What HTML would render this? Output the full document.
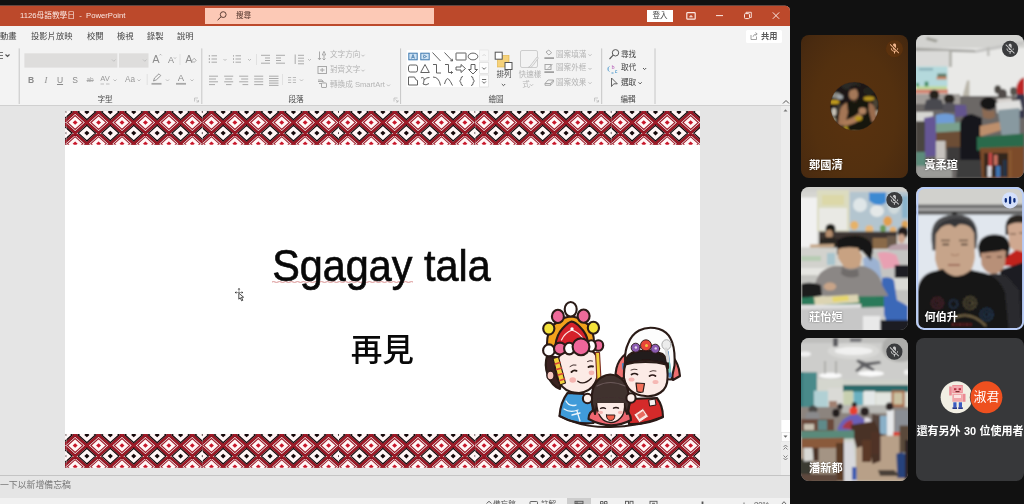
<!DOCTYPE html>
<html lang="zh-Hant">
<head>
<meta charset="utf-8">
<title>Meet</title>
<style>
*{box-sizing:border-box;margin:0;padding:0}
html,body{width:1024px;height:504px;overflow:hidden;background:#111;}
body{position:relative;font-family:"Liberation Sans","Noto Sans CJK TC",sans-serif;color:#444;}
svg{display:block}
#share{position:absolute;left:0;top:0;width:790px;height:504px;background:#e5e5e5;overflow:hidden;clip-path:inset(5.7px 0 0 0 round 0 5px 0 0)}
#share div,#share span,#share svg{position:absolute}
#titlebar{left:0;top:0;width:790px;height:26.2px;background:#bc492b}
#title{left:20px;top:9.5px;font-size:7.7px;line-height:12px;color:#fbe9e3;white-space:nowrap}
#search{left:205px;top:8.3px;width:229px;height:15.6px;background:#fcc9b6}
#search span{left:31px;top:1.6px;font-size:7.6px;line-height:12px;color:#4e3229}
#login{left:646.5px;top:10.1px;width:26px;height:12px;background:#fff;color:#444;font-size:7.6px;line-height:12px;text-align:center}
#rb{left:0;top:0;width:790px;height:504px;filter:blur(0.350px)}
#ribbon{left:0;top:26.2px;width:790px;height:79.700px;background:#f3f3f3;border-bottom:1px solid #d0d0d0}
.t{font-size:8.3px;line-height:12px;color:#454545;white-space:nowrap;transform:translateY(-50%)}
.g{font-size:7.6px;line-height:12px;color:#4a4a4a;white-space:nowrap;transform:translate(-50%,-50%)}
.d{font-size:7.6px;line-height:12px;color:#b4b4b4;white-space:nowrap;transform:translateY(-50%)}
.k{font-size:7.6px;line-height:12px;color:#444;white-space:nowrap;transform:translateY(-50%)}
.c{transform:translate(-50%,-50%) !important}
/*noLCD*/.t,.g,.d,.k,#title,#search span,#login,#notes span,#status span{will-change:transform}
#slide{left:64.5px;top:111px;width:635px;height:356.6px;background:#fff;overflow:hidden}
.band{left:0;filter:blur(0.400px)}
#t1{left:-0.500px;width:635px;top:131.200px;text-align:center;font-size:44.400px;line-height:48px;color:#080808;white-space:nowrap;letter-spacing:0;-webkit-text-stroke:0.650px #080808;filter:blur(0.350px);transform:scaleX(0.932);transform-origin:50% 50%}
#t2{left:0.300px;width:635px;top:218.800px;text-align:center;font-size:31.600px;line-height:40px;color:#080808;white-space:nowrap;font-weight:500;filter:blur(0.350px)}
#notes{left:0;top:475px;width:790px;height:23px;background:#e5e5e5;border-top:1px solid #c4c4c4}
#notes span{left:0;top:3.400px;font-size:8.900px;line-height:12px;color:#777;white-space:nowrap}
#status{left:0;top:497.5px;width:790px;height:7px;background:#f1f1f1;overflow:hidden}
#status span{font-size:7.6px;line-height:10px;color:#555;white-space:nowrap;top:2.5px}
#vsb{left:781px;top:106px;width:9px;height:369px;background:#ececec}
.tile{position:absolute;width:107px;height:143px;border-radius:8px;overflow:hidden;background:#37383a}
.tile .nm{position:absolute;left:8px;bottom:6.100px;font-size:11.200px;line-height:14px;color:#fff;font-weight:700;white-space:nowrap;text-shadow:0 0 2px rgba(0,0,0,.55);filter:blur(0.300px)}
</style>
</head>
<body>
<div id="share">
 <div id="rb">
  <div id="titlebar">
    <div id="title">1126母語教學日&nbsp; -&nbsp; PowerPoint</div>
    <div id="search"><span>搜尋</span>
      <svg style="left:10px;top:2px" width="14" height="12" viewBox="0 0 14 12"><circle cx="8.2" cy="4.6" r="2.9" fill="none" stroke="#4e3229" stroke-width="0.9"/><path d="M6 6.8L2.6 10.2" stroke="#4e3229" stroke-width="1" fill="none"/></svg>
    </div>
    <div id="login">登入</div>
    <svg style="left:680px;top:6px" width="110" height="20" viewBox="680 6 110 20" fill="none" stroke="#fbe9e3" stroke-width="1">
      <rect x="686.8" y="12.6" width="8.4" height="6.6" rx="0.8" stroke-width="1.2"/><path d="M689.3 16.8h3.4M691 15v2" stroke-width="1"/>
      <path d="M716 15.6h7"/>
      <rect x="744.5" y="13.6" width="5" height="5" rx="1"/><path d="M746 13.3v-1h5.3v5.2h-1.2" stroke-width="0.9"/>
      <path d="M772.8 12.4l6.4 6.4M779.2 12.4l-6.4 6.4"/>
    </svg>
  </div>
  <div id="ribbon"></div>
  <span class="t" style="left:0;top:35.7px">動畫</span><span class="t" style="left:31px;top:35.7px">投影片放映</span><span class="t" style="left:87px;top:35.7px">校閱</span><span class="t" style="left:117px;top:35.7px">檢視</span><span class="t" style="left:147px;top:35.7px">錄製</span><span class="t" style="left:177px;top:35.7px">說明</span>
  <div style="left:745.9px;top:30px;width:36.6px;height:13.2px;background:#fff;border-radius:1.5px"></div>
  <span class="t" style="left:760.5px;top:36.6px;font-weight:700;font-size:8.2px;color:#5a5a5a">共用</span>
  <span class="g" style="left:105px;top:99.7px">字型</span><span class="g" style="left:296px;top:99.7px">段落</span><span class="g" style="left:496px;top:99.7px">繪圖</span><span class="g" style="left:627.7px;top:99.7px">編輯</span>
  <span class="d" style="left:329.5px;top:55.3px">文字方向</span><span class="d" style="left:329.5px;top:70px">對齊文字</span><span class="d" style="left:329.5px;top:85px">轉換成 SmartArt</span>
  <span class="d" style="left:556px;top:54.5px">圖案填滿</span><span class="d" style="left:556px;top:68.3px">圖案外框</span><span class="d" style="left:556px;top:82.6px">圖案效果</span>
  <span class="k" style="left:621px;top:54.5px">尋找</span><span class="k" style="left:621px;top:68.3px">取代</span><span class="k" style="left:621px;top:82.6px">選取</span>
  <span class="k c" style="left:503.5px;top:75px;color:#4a4a4a">排列</span>
  <span class="d c" style="left:529.5px;top:75px">快速樣</span><span class="d c" style="left:526px;top:84.5px">式</span>
  <span class="k c" style="left:31px;top:79.7px;font-weight:700;color:#8a8a8a;font-size:8.5px">B</span>
  <span class="k c" style="left:46px;top:79.7px;font-style:italic;color:#8a8a8a;font-size:8.5px;font-family:'Liberation Serif',serif">I</span>
  <span class="k c" style="left:60.4px;top:79.7px;text-decoration:underline;color:#8a8a8a;font-size:8.5px">U</span>
  <span class="k c" style="left:75px;top:79.7px;color:#8a8a8a;font-size:8.5px">S</span>
  <span class="k c" style="left:90.3px;top:80.2px;text-decoration:line-through;color:#a8a8a8;font-size:6.5px">ab</span>
  <span class="k c" style="left:105px;top:78.8px;color:#999;font-size:7.6px">AV</span>
  <span class="k c" style="left:129.5px;top:79.7px;color:#999;font-size:8.2px">Aa</span>
  <span class="k c" style="left:155.5px;top:59px;color:#8c8c8c;font-size:11px">A</span>
  <span class="k c" style="left:170.6px;top:59.6px;color:#8c8c8c;font-size:9px">A</span>
  <span class="k c" style="left:188.5px;top:58.6px;color:#8c8c8c;font-size:11px">A</span>
  <span class="k c" style="left:180.8px;top:78.2px;color:#8c8c8c;font-size:9.5px">A</span>
  <svg style="left:0;top:26px" width="790" height="80" viewBox="0 26 790 80" fill="none" stroke="#9a9a9a" stroke-width="0.9">
    <!-- separators -->
    <path d="M19.2 48.4V104M201.8 48.4V104M400.6 48.4V104M601.7 48.4V104M655 48.4V104" stroke="#c6c6c6" stroke-width="1"/>
    <path d="M256.5 54v11M282.5 74v11M180 54v11M147.2 74v11" stroke="#dcdcdc" stroke-width="0.8"/>
    <!-- font boxes -->
    <rect x="24.4" y="53.3" width="93" height="14.3" fill="#dedddc" stroke="none"/><rect x="118.9" y="53.3" width="29.6" height="14.3" fill="#dedddc" stroke="none"/>
    <path d="M112 59.5l1.8 1.8 1.8-1.8M143 59.5l1.8 1.8 1.8-1.8" stroke="#bdbdbd"/>
    <path d="M5.5 54.5l2 2 2-2" stroke="#555" stroke-width="1.1"/><path d="M0 52.5h3M0 55.5h3M0 58.5h3" stroke="#666"/>
    <!-- small carets -->
    <path d="M113.5 79.5l1.5 1.5 1.5-1.5M137.5 79.5l1.5 1.5 1.5-1.5M166 79.5l1.5 1.5 1.5-1.5M190.5 79.5l1.5 1.5 1.5-1.5M223.5 59l1.5 1.5 1.5-1.5M248 59l1.5 1.5 1.5-1.5M308 59l1.5 1.5 1.5-1.5M300 79.5l1.5 1.5 1.5-1.5M361.5 54.8l1.5 1.5 1.5-1.5M361.5 69.8l1.5 1.5 1.5-1.5M387 84.6l1.5 1.5 1.5-1.5M588.5 54.3l1.5 1.5 1.5-1.5M588.5 68l1.5 1.5 1.5-1.5M588.5 82.3l1.5 1.5 1.5-1.5M530 84.3l1.5 1.5 1.5-1.5" stroke="#b8b8b8"/>
    <path d="M643 68l1.6 1.6 1.6-1.6M638.5 82.3l1.6 1.6 1.6-1.6M501.8 84l1.7 1.7 1.7-1.7" stroke="#555" stroke-width="1"/>
    <path d="M100.5 84h3.5M106 84h3.5" stroke="#aaa" stroke-width="0.7"/>
    <path d="M159.5 55.3l1 -1 1 1M174 57.5l1 1 1-1" stroke="#999" stroke-width="0.7"/>
    <path d="M192 60.5l2.2-2.2 2 2-2.2 2.2z" stroke="#9a9a9a" stroke-width="0.8" fill="#f3f3f3"/>
    <!-- highlighter & font color -->
    <path d="M153.5 81l1-3 4.5-4.200 1.800 1.800-4.500 4.300z" stroke="#8c8c8c"/><path d="M151.500 83.800h10" stroke="#a8a8a8" stroke-width="1.800"/>
    <path d="M176 83.800h10" stroke="#a8a8a8" stroke-width="1.800"/>
    <!-- list icons -->
    <g stroke="#a2a2a2" stroke-width="0.9">
    <path d="M211.500 55.800h5.500M211.500 59h5.500M211.500 62.200h5.500M235.500 55.800h5.500M235.500 59h5.500M235.500 62.200h5.500"/>
    <path d="M208.800 55.800h1.200M208.800 59h1.200M208.800 62.200h1.200M233 55.800h1M233 59h1M233 62.200h1" stroke-width="1.300"/>
    <path d="M261 55.300h9M265 58h5M265 60.500h5M261 63.200h9M276 55.300h9M276 58h5M276 60.500h5M276 63.200h9"/>
    <path d="M298 55.300h6M298 58.200h6M298 61h6M298 63.800h6M295.200 54.500v9.500"/>
    <path d="M209 76.200h9M209 79h7M209 81.800h9M209 84.600h6"/>
    <path d="M224.200 76.200h9M225.200 79h7M224.200 81.800h9M226 84.600h5.500"/>
    <path d="M239.200 76.200h9M241.200 79h7M239.200 81.800h9M242.500 84.600h5.700"/>
    <path d="M254.200 76.200h9M254.200 79h9M254.200 81.800h9M254.200 84.600h9"/>
    <path d="M269 76.200h9.500M269 78.500h9.500M269 80.800h9.500M269 83.100h9.500M269 85.400h9.500"/>
    <path d="M288 77.500h3.200M292.800 77.500h3.200M288 80h3.200M292.800 80h3.200M288 82.500h3.200M292.800 82.500h3.200" stroke="#b5b5b5"/>
    </g>
    <!-- dialog launchers -->
    <path d="M194.500 98h3.500M194.500 98v3.500M196 99.500l2.500 2.500M198.500 100v2h-2M394 98h3.500M394 98v3.500M395.500 99.500l2.500 2.500M398 100v2h-2M594.500 98h3.500M594.500 98v3.500M596 99.500l2.500 2.500M598.500 100v2h-2" stroke="#b4b4b4" stroke-width="0.7"/>
    <!-- text direction etc icons -->
    <g stroke="#a0a0a0" stroke-width="0.9">
    <path d="M319.500 51.500v8M318 58l1.500 1.800 1.500-1.800M324 51.300l-1.700 3.700h3.400zM324 55.500v4.500M322.500 58.500l1.500 1.500 1.500-1.500"/>
    <rect x="318" y="66.500" width="8.500" height="7"/><path d="M320 70h4.500M322.200 68v4"/>
    <path d="M318 81.500h5M319 83.500h3" /><rect x="321.500" y="83" width="5" height="4.500" rx="0.500"/><path d="M318 80l4 0 2 2.500"/>
    <path d="M546 52l2.800-2 2.800 2.800-2.800 2.200zM544.500 58h9.500" /><path d="M544.500 58.200h9.500" stroke-width="1.600"/>
    <rect x="545" y="64.500" width="6" height="5"/><path d="M548 68.500l4.500-4.500M544.500 72h9.500" /><path d="M544.500 72.200h9.500" stroke-width="1.600"/>
    <path d="M545 83.500l3-3.500h5.500l-3 3.500zM545 83.500v1.800h5.500l3-3.500v-1.800M550.500 83.500v1.800"/>
    </g>
    <!-- shapes gallery -->
    <rect x="406.700" y="50" width="72.600" height="37" fill="#fff" stroke="none"/>
    <rect x="479.700" y="50" width="8.800" height="11" fill="#f7f7f7" stroke="#e2e2e2" stroke-width="0.600"/><rect x="479.700" y="62.500" width="8.800" height="11" fill="#fdfdfd" stroke="#d6d6d6" stroke-width="0.600"/><rect x="479.700" y="75" width="8.800" height="12" fill="#fdfdfd" stroke="#d6d6d6" stroke-width="0.600"/>
    <path d="M482.500 56l1.600-1.600 1.600 1.600" stroke="#cfcfcf" stroke-width="0.800"/><path d="M482.300 67.500l1.800 1.800 1.800-1.800M482.300 81.500l1.800 1.800 1.800-1.800M482 79.500h4.200" stroke="#555" stroke-width="0.900"/>
    <g stroke="#505050" stroke-width="0.900">
      <rect x="408.800" y="53.200" width="8.400" height="6.600" stroke="#3f7ab0" fill="#cfe3f4" stroke-width="1"/><rect x="420.800" y="53.200" width="8.400" height="6.600" stroke="#3f7ab0" fill="#cfe3f4" stroke-width="1"/>
      <path d="M411.500 58.500l1.500-4 1.500 4M412 57.300h2" stroke="#2f6aa0" stroke-width="0.700"/><path d="M423.500 54.800l3 1.700-3 1.700M423.500 57.500v-2" stroke="#2f6aa0" stroke-width="0.700"/>
      <path d="M432.500 52.500l8 8.500M444.500 52.500l8 8.500M452.500 61l-0.300-2.200M452.500 61l-2.200-0.300"/>
      <rect x="456" y="53" width="10" height="7" rx="0.300"/><ellipse cx="473" cy="56.500" rx="4.800" ry="3.400"/>
      <rect x="408.500" y="65" width="9" height="7" rx="1.800"/><path d="M425 64.500l4.300 8h-8.600z"/><path d="M433 64.500h3.500v8.500h4.500M445 64.500h3.500v8h4M452.500 72.500l-1.500-1.200M452.500 72.500l-1.500 1.200"/>
      <path d="M456 67h5v-2.500l4.500 4-4.500 4v-2.500h-5z"/><path d="M471 64.500h4v5h2.500l-4.500 4.500-4.500-4.500h2.500z"/>
      <path d="M408.500 85v-8h6q1 3.500 3 3.500v4.500z"/><path d="M421 78q3-1.500 3 1.500t-1 4.500q3 2 6-0.500M424 80q3-3 5.500-2.500"/><path d="M433 77q6 0 7.500 8.500M444.500 84q2-7 4-5t4 6.500"/>
      <path d="M463 76.500q-2 0-2 2t-1.500 2.500q1.500 0.500 1.500 2.500t2 2M471 76.500q2 0 2 2t1.500 2.500q-1.500 0.500-1.500 2.500t-2 2"/>
    </g>
    <!-- arrange icon -->
    <rect x="497.500" y="55.500" width="11.500" height="11.500" fill="#f6d27a" stroke="#e0b040" stroke-width="0.600"/>
    <rect x="495.200" y="52.200" width="7" height="7" fill="#fff" stroke="#555" stroke-width="1"/><rect x="505" y="62.500" width="7" height="7" fill="#fff" stroke="#555" stroke-width="1"/>
    <!-- quick styles icon -->
    <rect x="520.500" y="50.500" width="17" height="17" rx="1.500" fill="#f3f3f3" stroke="#cdcdcd" stroke-width="1"/><path d="M528 67.500q2-0.500 4-4l5-6.500q1.500 0 1 1.500l-5 7q-1.500 2.500-5 2z" fill="#eee" stroke="#c2c2c2" stroke-width="0.800"/>
    <!-- find/replace/select icons -->
    <circle cx="615.500" cy="52.800" r="3.200" stroke="#555" stroke-width="1"/><path d="M613.200 55.200l-3.700 3.800" stroke="#555" stroke-width="1.100"/>
    <path d="M611.500 86.500v-8.500l5.800 5.800h-3.500z" stroke="#555" stroke-width="0.900"/>
    <path d="M609.300 71.500a3 3 0 0 1 0-5M611.500 73h2" stroke="#3a8fc8" stroke-width="0.900"/>
    <!-- collapse caret -->
    <path d="M783 103.500l3-3 3 3" stroke="#555" stroke-width="1"/>
    <!-- share icon -->
    <path d="M751 35v4.500h5.500v-3M753 36.800q0.500-2.500 3.500-2.800M755.500 32.500l1.700 1.500-1.700 1.500" stroke="#8a8a8a" stroke-width="0.800"/>
  </svg>
  <span class="k c" style="left:613.2px;top:66.600px;color:#b04fb0;font-size:5.500px">b</span><span class="k c" style="left:616px;top:70.500px;color:#3a8fc8;font-size:5.500px">c</span>
  <!-- right scrollbar -->
  <svg style="left:780px;top:106px" width="10" height="392" viewBox="780 106 10 392" fill="none">
    <rect x="781" y="106" width="9" height="369" fill="#ececec"/>
    <rect x="781.500" y="420" width="8.500" height="12" fill="#fff"/>
    <rect x="781.500" y="432.500" width="8.500" height="9" fill="#fdfdfd" stroke="#dadada" stroke-width="0.500"/>
    <path d="M783.500 111.500l2 -2.200 2 2.200z" fill="#777"/><path d="M783.500 435.500l2 2.200 2-2.200z" fill="#666"/>
    <path d="M783.500 447l2-2 2 2M783.500 449.500l2-2 2 2M783.500 455.500l2 2 2-2M783.500 458l2 2 2-2" stroke="#666" stroke-width="0.800"/>
  </svg>

 </div>
  <div id="slide">
    <div style="left:0;top:0"><svg class="band" width="635" height="33.75" viewBox="0 0 635 33.75"><defs><clipPath id="bc"><rect x="0" y="0" width="136.3" height="33.75"/></clipPath><g id="bt" clip-path="url(#bc)"><rect width="136.3" height="33.75" fill="#fff5f5"/><path d="M-26.39 -9.70L-14.68 -20.30L-2.96 -9.70L-14.68 0.90ZM-2.96 -9.70L8.75 -20.30L20.46 -9.70L8.75 0.90ZM20.46 -9.70L32.18 -20.30L43.89 -9.70L32.18 0.90ZM43.89 -9.70L55.61 -20.30L67.33 -9.70L55.61 0.90ZM67.32 -9.70L79.04 -20.30L90.75 -9.70L79.04 0.90ZM90.75 -9.70L102.47 -20.30L114.19 -9.70L102.47 0.90ZM114.19 -9.70L125.90 -20.30L137.62 -9.70L125.90 0.90ZM137.61 -9.70L149.33 -20.30L161.04 -9.70L149.33 0.90ZM-26.39 11.50L-14.68 0.90L-2.96 11.50L-14.68 22.10ZM-2.96 11.50L8.75 0.90L20.46 11.50L8.75 22.10ZM20.46 11.50L32.18 0.90L43.89 11.50L32.18 22.10ZM43.89 11.50L55.61 0.90L67.33 11.50L55.61 22.10ZM67.32 11.50L79.04 0.90L90.75 11.50L79.04 22.10ZM90.75 11.50L102.47 0.90L114.19 11.50L102.47 22.10ZM114.19 11.50L125.90 0.90L137.62 11.50L125.90 22.10ZM137.61 11.50L149.33 0.90L161.04 11.50L149.33 22.10ZM-26.39 32.70L-14.68 22.10L-2.96 32.70L-14.68 43.30ZM-2.96 32.70L8.75 22.10L20.46 32.70L8.75 43.30ZM20.46 32.70L32.18 22.10L43.89 32.70L32.18 43.30ZM43.89 32.70L55.61 22.10L67.33 32.70L55.61 43.30ZM67.32 32.70L79.04 22.10L90.75 32.70L79.04 43.30ZM90.75 32.70L102.47 22.10L114.19 32.70L102.47 43.30ZM114.19 32.70L125.90 22.10L137.62 32.70L125.90 43.30ZM137.61 32.70L149.33 22.10L161.04 32.70L149.33 43.30ZM-26.39 53.90L-14.68 43.30L-2.96 53.90L-14.68 64.50ZM-2.96 53.90L8.75 43.30L20.46 53.90L8.75 64.50ZM20.46 53.90L32.18 43.30L43.89 53.90L32.18 64.50ZM43.89 53.90L55.61 43.30L67.33 53.90L55.61 64.50ZM67.32 53.90L79.04 43.30L90.75 53.90L79.04 64.50ZM90.75 53.90L102.47 43.30L114.19 53.90L102.47 64.50ZM114.19 53.90L125.90 43.30L137.62 53.90L125.90 64.50ZM137.61 53.90L149.33 43.30L161.04 53.90L149.33 64.50Z" fill="none" stroke="#851320" stroke-width="2.9"/><path d="M-26.39 -9.70L-14.68 -20.30L-2.96 -9.70L-14.68 0.90ZM-2.96 -9.70L8.75 -20.30L20.46 -9.70L8.75 0.90ZM20.46 -9.70L32.18 -20.30L43.89 -9.70L32.18 0.90ZM43.89 -9.70L55.61 -20.30L67.33 -9.70L55.61 0.90ZM67.32 -9.70L79.04 -20.30L90.75 -9.70L79.04 0.90ZM90.75 -9.70L102.47 -20.30L114.19 -9.70L102.47 0.90ZM114.19 -9.70L125.90 -20.30L137.62 -9.70L125.90 0.90ZM137.61 -9.70L149.33 -20.30L161.04 -9.70L149.33 0.90ZM-26.39 11.50L-14.68 0.90L-2.96 11.50L-14.68 22.10ZM-2.96 11.50L8.75 0.90L20.46 11.50L8.75 22.10ZM20.46 11.50L32.18 0.90L43.89 11.50L32.18 22.10ZM43.89 11.50L55.61 0.90L67.33 11.50L55.61 22.10ZM67.32 11.50L79.04 0.90L90.75 11.50L79.04 22.10ZM90.75 11.50L102.47 0.90L114.19 11.50L102.47 22.10ZM114.19 11.50L125.90 0.90L137.62 11.50L125.90 22.10ZM137.61 11.50L149.33 0.90L161.04 11.50L149.33 22.10ZM-26.39 32.70L-14.68 22.10L-2.96 32.70L-14.68 43.30ZM-2.96 32.70L8.75 22.10L20.46 32.70L8.75 43.30ZM20.46 32.70L32.18 22.10L43.89 32.70L32.18 43.30ZM43.89 32.70L55.61 22.10L67.33 32.70L55.61 43.30ZM67.32 32.70L79.04 22.10L90.75 32.70L79.04 43.30ZM90.75 32.70L102.47 22.10L114.19 32.70L102.47 43.30ZM114.19 32.70L125.90 22.10L137.62 32.70L125.90 43.30ZM137.61 32.70L149.33 22.10L161.04 32.70L149.33 43.30ZM-26.39 53.90L-14.68 43.30L-2.96 53.90L-14.68 64.50ZM-2.96 53.90L8.75 43.30L20.46 53.90L8.75 64.50ZM20.46 53.90L32.18 43.30L43.89 53.90L32.18 64.50ZM43.89 53.90L55.61 43.30L67.33 53.90L55.61 64.50ZM67.32 53.90L79.04 43.30L90.75 53.90L79.04 64.50ZM90.75 53.90L102.47 43.30L114.19 53.90L102.47 64.50ZM114.19 53.90L125.90 43.30L137.62 53.90L125.90 64.50ZM137.61 53.90L149.33 43.30L161.04 53.90L149.33 64.50Z" fill="none" stroke="#a51c29" stroke-width="1.1"/><path d="M-22.41 -9.70L-14.68 -16.70L-6.95 -9.70L-14.68 -2.70ZM1.02 -9.70L8.75 -16.70L16.48 -9.70L8.75 -2.70ZM24.45 -9.70L32.18 -16.70L39.91 -9.70L32.18 -2.70ZM47.88 -9.70L55.61 -16.70L63.34 -9.70L55.61 -2.70ZM71.31 -9.70L79.04 -16.70L86.77 -9.70L79.04 -2.70ZM94.74 -9.70L102.47 -16.70L110.20 -9.70L102.47 -2.70ZM118.17 -9.70L125.90 -16.70L133.63 -9.70L125.90 -2.70ZM141.60 -9.70L149.33 -16.70L157.06 -9.70L149.33 -2.70ZM-22.41 11.50L-14.68 4.50L-6.95 11.50L-14.68 18.50ZM1.02 11.50L8.75 4.50L16.48 11.50L8.75 18.50ZM24.45 11.50L32.18 4.50L39.91 11.50L32.18 18.50ZM47.88 11.50L55.61 4.50L63.34 11.50L55.61 18.50ZM71.31 11.50L79.04 4.50L86.77 11.50L79.04 18.50ZM94.74 11.50L102.47 4.50L110.20 11.50L102.47 18.50ZM118.17 11.50L125.90 4.50L133.63 11.50L125.90 18.50ZM141.60 11.50L149.33 4.50L157.06 11.50L149.33 18.50ZM-22.41 32.70L-14.68 25.70L-6.95 32.70L-14.68 39.70ZM1.02 32.70L8.75 25.70L16.48 32.70L8.75 39.70ZM24.45 32.70L32.18 25.70L39.91 32.70L32.18 39.70ZM47.88 32.70L55.61 25.70L63.34 32.70L55.61 39.70ZM71.31 32.70L79.04 25.70L86.77 32.70L79.04 39.70ZM94.74 32.70L102.47 25.70L110.20 32.70L102.47 39.70ZM118.17 32.70L125.90 25.70L133.63 32.70L125.90 39.70ZM141.60 32.70L149.33 25.70L157.06 32.70L149.33 39.70ZM-22.41 53.90L-14.68 46.90L-6.95 53.90L-14.68 60.90ZM1.02 53.90L8.75 46.90L16.48 53.90L8.75 60.90ZM24.45 53.90L32.18 46.90L39.91 53.90L32.18 60.90ZM47.88 53.90L55.61 46.90L63.34 53.90L55.61 60.90ZM71.31 53.90L79.04 46.90L86.77 53.90L79.04 60.90ZM94.74 53.90L102.47 46.90L110.20 53.90L102.47 60.90ZM118.17 53.90L125.90 46.90L133.63 53.90L125.90 60.90ZM141.60 53.90L149.33 46.90L157.06 53.90L149.33 60.90Z" fill="none" stroke="#9c1826" stroke-width="1.05"/><path d="M-17.14 -9.70L-14.68 -11.93L-12.22 -9.70L-14.68 -7.47ZM6.29 -9.70L8.75 -11.93L11.21 -9.70L8.75 -7.47ZM29.72 -9.70L32.18 -11.93L34.64 -9.70L32.18 -7.47ZM53.15 -9.70L55.61 -11.93L58.07 -9.70L55.61 -7.47ZM76.58 -9.70L79.04 -11.93L81.50 -9.70L79.04 -7.47ZM100.01 -9.70L102.47 -11.93L104.93 -9.70L102.47 -7.47ZM123.44 -9.70L125.90 -11.93L128.36 -9.70L125.90 -7.47ZM146.87 -9.70L149.33 -11.93L151.79 -9.70L149.33 -7.47ZM-17.14 11.50L-14.68 9.27L-12.22 11.50L-14.68 13.73ZM6.29 11.50L8.75 9.27L11.21 11.50L8.75 13.73ZM29.72 11.50L32.18 9.27L34.64 11.50L32.18 13.73ZM53.15 11.50L55.61 9.27L58.07 11.50L55.61 13.73ZM76.58 11.50L79.04 9.27L81.50 11.50L79.04 13.73ZM100.01 11.50L102.47 9.27L104.93 11.50L102.47 13.73ZM123.44 11.50L125.90 9.27L128.36 11.50L125.90 13.73ZM146.87 11.50L149.33 9.27L151.79 11.50L149.33 13.73ZM-17.14 32.70L-14.68 30.47L-12.22 32.70L-14.68 34.93ZM6.29 32.70L8.75 30.47L11.21 32.70L8.75 34.93ZM29.72 32.70L32.18 30.47L34.64 32.70L32.18 34.93ZM53.15 32.70L55.61 30.47L58.07 32.70L55.61 34.93ZM76.58 32.70L79.04 30.47L81.50 32.70L79.04 34.93ZM100.01 32.70L102.47 30.47L104.93 32.70L102.47 34.93ZM123.44 32.70L125.90 30.47L128.36 32.70L125.90 34.93ZM146.87 32.70L149.33 30.47L151.79 32.70L149.33 34.93ZM-17.14 53.90L-14.68 51.67L-12.22 53.90L-14.68 56.13ZM6.29 53.90L8.75 51.67L11.21 53.90L8.75 56.13ZM29.72 53.90L32.18 51.67L34.64 53.90L32.18 56.13ZM53.15 53.90L55.61 51.67L58.07 53.90L55.61 56.13ZM76.58 53.90L79.04 51.67L81.50 53.90L79.04 56.13ZM100.01 53.90L102.47 51.67L104.93 53.90L102.47 56.13ZM123.44 53.90L125.90 51.67L128.36 53.90L125.90 56.13ZM146.87 53.90L149.33 51.67L151.79 53.90L149.33 56.13Z" fill="#c8162a"/><path d="M-11.58 0.90L-2.96 -6.89L5.65 0.90L-2.96 8.69ZM11.85 0.90L20.46 -6.89L29.08 0.90L20.46 8.69ZM35.28 0.90L43.89 -6.89L52.51 0.90L43.89 8.69ZM58.71 0.90L67.33 -6.89L75.94 0.90L67.33 8.69ZM82.14 0.90L90.75 -6.89L99.37 0.90L90.75 8.69ZM105.57 0.90L114.19 -6.89L122.80 0.90L114.19 8.69ZM129.00 0.90L137.62 -6.89L146.23 0.90L137.62 8.69ZM152.43 0.90L161.04 -6.89L169.66 0.90L161.04 8.69ZM-11.58 22.10L-2.96 14.31L5.65 22.10L-2.96 29.89ZM11.85 22.10L20.46 14.31L29.08 22.10L20.46 29.89ZM35.28 22.10L43.89 14.31L52.51 22.10L43.89 29.89ZM58.71 22.10L67.33 14.31L75.94 22.10L67.33 29.89ZM82.14 22.10L90.75 14.31L99.37 22.10L90.75 29.89ZM105.57 22.10L114.19 14.31L122.80 22.10L114.19 29.89ZM129.00 22.10L137.62 14.31L146.23 22.10L137.62 29.89ZM152.43 22.10L161.04 14.31L169.66 22.10L161.04 29.89ZM-11.58 43.30L-2.96 35.51L5.65 43.30L-2.96 51.09ZM11.85 43.30L20.46 35.51L29.08 43.30L20.46 51.09ZM35.28 43.30L43.89 35.51L52.51 43.30L43.89 51.09ZM58.71 43.30L67.33 35.51L75.94 43.30L67.33 51.09ZM82.14 43.30L90.75 35.51L99.37 43.30L90.75 51.09ZM105.57 43.30L114.19 35.51L122.80 43.30L114.19 51.09ZM129.00 43.30L137.62 35.51L146.23 43.30L137.62 51.09ZM152.43 43.30L161.04 35.51L169.66 43.30L161.04 51.09ZM-11.58 64.50L-2.96 56.71L5.65 64.50L-2.96 72.29ZM11.85 64.50L20.46 56.71L29.08 64.50L20.46 72.29ZM35.28 64.50L43.89 56.71L52.51 64.50L43.89 72.29ZM58.71 64.50L67.33 56.71L75.94 64.50L67.33 72.29ZM82.14 64.50L90.75 56.71L99.37 64.50L90.75 72.29ZM105.57 64.50L114.19 56.71L122.80 64.50L114.19 72.29ZM129.00 64.50L137.62 56.71L146.23 64.50L137.62 72.29ZM152.43 64.50L161.04 56.71L169.66 64.50L161.04 72.29Z" fill="none" stroke="#14080a" stroke-width="1.25"/><path d="M-5.54 0.90L-2.96 -1.43L-0.39 0.90L-2.96 3.23ZM17.89 0.90L20.46 -1.43L23.04 0.90L20.46 3.23ZM41.32 0.90L43.89 -1.43L46.47 0.90L43.89 3.23ZM64.75 0.90L67.33 -1.43L69.90 0.90L67.33 3.23ZM88.18 0.90L90.75 -1.43L93.33 0.90L90.75 3.23ZM111.61 0.90L114.19 -1.43L116.76 0.90L114.19 3.23ZM135.04 0.90L137.62 -1.43L140.19 0.90L137.62 3.23ZM158.47 0.90L161.04 -1.43L163.62 0.90L161.04 3.23ZM-5.54 22.10L-2.96 19.77L-0.39 22.10L-2.96 24.43ZM17.89 22.10L20.46 19.77L23.04 22.10L20.46 24.43ZM41.32 22.10L43.89 19.77L46.47 22.10L43.89 24.43ZM64.75 22.10L67.33 19.77L69.90 22.10L67.33 24.43ZM88.18 22.10L90.75 19.77L93.33 22.10L90.75 24.43ZM111.61 22.10L114.19 19.77L116.76 22.10L114.19 24.43ZM135.04 22.10L137.62 19.77L140.19 22.10L137.62 24.43ZM158.47 22.10L161.04 19.77L163.62 22.10L161.04 24.43ZM-5.54 43.30L-2.96 40.97L-0.39 43.30L-2.96 45.63ZM17.89 43.30L20.46 40.97L23.04 43.30L20.46 45.63ZM41.32 43.30L43.89 40.97L46.47 43.30L43.89 45.63ZM64.75 43.30L67.33 40.97L69.90 43.30L67.33 45.63ZM88.18 43.30L90.75 40.97L93.33 43.30L90.75 45.63ZM111.61 43.30L114.19 40.97L116.76 43.30L114.19 45.63ZM135.04 43.30L137.62 40.97L140.19 43.30L137.62 45.63ZM158.47 43.30L161.04 40.97L163.62 43.30L161.04 45.63ZM-5.54 64.50L-2.96 62.17L-0.39 64.50L-2.96 66.83ZM17.89 64.50L20.46 62.17L23.04 64.50L20.46 66.83ZM41.32 64.50L43.89 62.17L46.47 64.50L43.89 66.83ZM64.75 64.50L67.33 62.17L69.90 64.50L67.33 66.83ZM88.18 64.50L90.75 62.17L93.33 64.50L90.75 66.83ZM111.61 64.50L114.19 62.17L116.76 64.50L114.19 66.83ZM135.04 64.50L137.62 62.17L140.19 64.50L137.62 66.83ZM158.47 64.50L161.04 62.17L163.62 64.50L161.04 66.83Z" fill="#15080a"/></g></defs><use href="#bt" x="-134.90" y="0"/><use href="#bt" x="1.40" y="0"/><use href="#bt" x="137.70" y="0"/><use href="#bt" x="274.00" y="0"/><use href="#bt" x="410.30" y="0"/><use href="#bt" x="546.60" y="0"/></svg></div>
    <div style="left:0;top:322.8px"><svg class="band" width="635" height="33.75" viewBox="0 0 635 33.75"><use href="#bt" x="-134.9" y="0"/><use href="#bt" x="1.4" y="0"/><use href="#bt" x="137.7" y="0"/><use href="#bt" x="274" y="0"/><use href="#bt" x="410.3" y="0"/><use href="#bt" x="546.6" y="0"/></svg></div>
    <svg width="0" height="0"><defs><filter id="tb" x="-5%" y="-5%" width="110%" height="110%"><feGaussianBlur stdDeviation="0.45"/></filter></defs></svg>
    <svg width="170" height="145" viewBox="530 290 170 145" style="left:465.5px;top:179px" stroke-linejoin="round" stroke-linecap="round">
<g filter="url(#tb)" stroke="#2b1a18" stroke-width="2.100">
<!-- left body (blue) -->
<path d="M559.500 416q1-14 8-23l16 1q8 4 9 10l1 19q-18 2-34-7z" fill="#3f9bd9"/>
<path d="M566 401q3 6 10 4M564 409q6 4 14 1M577 411l3 10M572 415l8-2" stroke="#eef6fc" stroke-width="1.300" fill="none"/>
<!-- right body (red) -->
<path d="M629 424q-2-16 2-25l26-1q6 8 6 19q-16 8-34 7z" fill="#d42a2a"/>
<path d="M649 400l6-1 1 6-6 1z" fill="#f4f0f0" stroke-width="1"/>
<path d="M634 414.500l9-6 5.500 8-9 6z" fill="#fbe6e2" stroke="#b83030" stroke-width="0.800"/><path d="M637 415l6-4 2.500 4-6 4z" fill="#e86a60" stroke="none"/>
<!-- left head hair -->
<path d="M547 356q-3 10 1 20q4 10 12 13l4-31z" fill="#3a2420"/>
<ellipse cx="550.500" cy="375.500" rx="3.600" ry="4.500" fill="#f6c9c0" stroke-width="1.400"/>
<!-- left face -->
<path d="M557 360q4-10 22-11t18 11q3 14-2 23t-16 10q-14 0-20-11t-2-22z" fill="#fcebe6"/>
<path d="M553 358.500l5.500-1.500 7 26-5.500 2z" fill="#f2d23c" stroke-width="1.100"/>
<path d="M555.200 364l4.800-1.500M556.700 369.500l4.800-1.500M558.200 375l4.800-1.500M559.700 380.500l4.800-1.500" stroke="#d8483a" stroke-width="1.500" fill="none"/>
<path d="M595.500 352.500l4 0 1.500 27-4 1.500z" fill="#f2d23c" stroke="#7a2a20" stroke-width="1.100"/>
<ellipse cx="572.700" cy="380" rx="3.300" ry="2.800" fill="#f4b4b0" stroke="none"/><ellipse cx="591.500" cy="372.800" rx="2.800" ry="2.400" fill="#f4b4b0" stroke="none"/>
<path d="M571.500 372q2.500-2.500 5-1.200M588.500 367q2-1.200 4.500-0.500" fill="none" stroke-width="1.900"/>
<path d="M570 366.500q3-2.500 6-1.500M587.500 361.500q2.500-1.500 5-0.500" fill="none" stroke-width="0.900"/>
<path d="M577.800 381.200q6 4.500 13.500-3" fill="none" stroke-width="1.400"/>
<!-- crown -->
<path d="M547 344q0-12 6-19l11-7 7-2 7 2 11 7q5 8 5 17l-2 4-44 2z" fill="#f2a21e"/>
<path d="M555.500 345q1-10 7-16.500q6-6.500 9-7q4 0.500 9 6q6 6 7.500 14l-2 4-29 1z" fill="#d4202c"/>
<path d="M561.500 340q3-7 10.500-10q7 2.500 11 8.500" fill="none" stroke="#fbe4e0" stroke-width="1.200"/><circle cx="572" cy="329" r="1.700" fill="#fff" stroke="none"/>
<ellipse cx="570.700" cy="309.300" rx="6" ry="7.300" fill="#fff"/>
<ellipse cx="557.900" cy="316.400" rx="6" ry="6.600" fill="#ee6a9a"/><ellipse cx="583.600" cy="316.100" rx="6" ry="6.600" fill="#ee6a9a"/>
<ellipse cx="548.800" cy="328.600" rx="5.600" ry="6" fill="#f4e23a"/><ellipse cx="593.400" cy="327.700" rx="5.600" ry="6" fill="#f4e23a"/>
<ellipse cx="598.400" cy="345.500" rx="4.800" ry="5.200" fill="#ee6a9a"/>
<ellipse cx="548.900" cy="350.400" rx="5.800" ry="6" fill="#fff"/>
<ellipse cx="591.300" cy="345.900" rx="4.600" ry="5.600" fill="#fff"/>
<ellipse cx="560" cy="348.600" rx="6" ry="6" fill="#ee6a9a"/>
<ellipse cx="569.300" cy="348.600" rx="5.200" ry="5.800" fill="#fff"/>
<ellipse cx="581" cy="346.800" rx="8.400" ry="8.400" fill="#f0669a"/>
<!-- right head: side bands -->
<path d="M615.500 374q1-13 10-20l2 22-6 3z" fill="#ee7070"/>
<path d="M670 354q9 8 10 22l-7 4-5-24z" fill="#ee7070"/>
<!-- headdress -->
<path d="M625.500 366q-1.500-14 2.500-22q3-9 11-13.500q9-4.500 20-1.500q8 2.500 11.500 9.500q5 9 4 27l-3 14-43-2z" fill="#fdfdfd"/>
<path d="M667 352l3 24" fill="none" stroke="#4a86c0" stroke-width="3.500"/><path d="M668.200 362l1.200 9" fill="none" stroke="#74cbb8" stroke-width="3.500"/><path d="M666.500 352.500l0.600 5" fill="none" stroke="#fff" stroke-width="3"/>
<path d="M623 364l0.500 5" fill="none" stroke="#4a86c0" stroke-width="2.200"/>
<!-- hair -->
<path d="M624.500 368q-0.500-11 8-15.500q14-4.500 30 1.500q6 5 5.500 14l-5-5q-17-5-34 0z" fill="#231a1a"/>
<!-- face -->
<path d="M624 378q-0.500-9 1.500-13.500q8-2.500 20-2.500t20.500 2.500q2 4.500 1.500 13.500q0 10-7 14.500t-15 3.500q-18-1-21.500-18z" fill="#fcebe6"/>

<ellipse cx="631.500" cy="379.500" rx="3" ry="2" fill="#f6b8b4" stroke="none"/><ellipse cx="655.500" cy="382" rx="3" ry="2" fill="#f6b8b4" stroke="none"/>
<path d="M631.500 374.500q3-2 6 0M649.500 376q3-2 6 0" fill="none" stroke-width="1.700"/>
<path d="M631 370q3-1.500 6-0.500M650 371.500q3-1.500 6-0.500" fill="none" stroke-width="0.800"/>
<path d="M636 383l8.500 0.500-1.500 8.500q-3.500 1-6-0.500z" fill="#f2705a" stroke-width="1.200"/>
<!-- flowers -->
<circle cx="635.700" cy="347.700" r="4.500" fill="#8a5ab0" stroke-width="0.900"/><circle cx="655.200" cy="348.700" r="4.500" fill="#8a5ab0" stroke-width="0.900"/><circle cx="646" cy="345.300" r="5.500" fill="#e84438" stroke-width="0.900"/>
<circle cx="646.500" cy="345.500" r="1.500" fill="#f6c040" stroke="none"/><circle cx="635.900" cy="347.500" r="1.200" fill="#e8d8f0" stroke="none"/><circle cx="655.700" cy="348.400" r="1.200" fill="#e8d8f0" stroke="none"/>
<ellipse cx="666.500" cy="344.700" rx="4.600" ry="5" fill="#ececec" stroke="#9a9a9a" stroke-width="0.800"/><path d="M666 349l2 12" stroke="#d8d8d8" stroke-width="3" fill="none"/>
<!-- child body -->
<path d="M588.500 419q0-8 8-10h26q8 2 8.500 11q-20 11-42.500-1z" fill="#ee6670"/>
<!-- child hair -->
<path d="M592 404q-2-20 10-27q8-5 17 0q11 7 10.500 27l-2.500 10-3-9-27 0-2 9z" fill="#40302f"/>
<path d="M597 386q13-7 28 0" fill="none" stroke="#6a5a58" stroke-width="1.200"/>
<!-- child face -->
<path d="M596.500 402q0-3 14-3t14 3q1 11-4 16t-10 4.500q-13-1-14-20.500z" fill="#fcebe6" stroke-width="1.400"/>
<path d="M595 400q6-3 15-3t16 3l0 3-31 0z" fill="#40302f" stroke="none"/>
<ellipse cx="600.500" cy="412.500" rx="2.600" ry="1.800" fill="#f6b8b4" stroke="none"/><ellipse cx="620.500" cy="412.500" rx="2.600" ry="1.800" fill="#f6b8b4" stroke="none"/>
<path d="M600.500 408.500q2.500-1.500 5 0M613.500 408.200q2.500-1.500 5 0" fill="none" stroke-width="1.400"/>
<path d="M606.400 415h8.500q0 5.500-4.200 5.500t-4.300-5.500z" fill="#f2604a" stroke-width="1"/>
<!-- hands -->
<ellipse cx="587.500" cy="398.500" rx="4.600" ry="4.800" fill="#fdf0ec"/><ellipse cx="631" cy="398" rx="4.600" ry="4.800" fill="#fdf0ec"/>
<path d="M559.500 416q22 11.500 51 11q28-0.500 52-10" fill="none" stroke-width="1.900"/>
</g>
</svg>

    <svg id="sq" style="left:206.500px;top:167.700px" width="144" height="6" viewBox="0 0 144 6"><path d="M1 3q1.500-0.800 3 0t3 0 3 0 3 0 3 0 3 0 3 0 3 0 3 0 3 0 3 0 3 0 3 0 3 0 3 0 3 0 3 0 3 0 3 0 3 0 3 0 3 0 3 0 3 0 3 0 3 0 3 0 3 0 3 0 3 0 3 0 3 0 3 0 3 0 3 0 3 0 3 0 3 0 3 0 3 0 3 0 3 0 3 0 3 0 3 0 3 0 3 0" fill="none" stroke="#d99090" stroke-width="1"/></svg>
    <svg id="cur" style="left:168px;top:175px;filter:blur(0.300px)" width="14" height="18" viewBox="232.500 286 14 18"><path d="M237.200 289.600l1.300-1.500 1.300 1.500zM235.900 291.200l-1.500 1.300 1.500 1.300zM241.100 291.200l1.500 1.300-1.500 1.300z" fill="#111"/><path d="M238.500 290v2.500M236 292.500h5" stroke="#555" stroke-width="0.600" fill="none"/><path d="M238.300 293.200v6l1.500-1.400 1.300 3 1.200-0.500-1.300-3 2.100-0.100z" fill="#fff" stroke="#222" stroke-width="0.800" stroke-linejoin="round"/></svg>
    <div id="t1">Sgagay tala</div>
    <div id="t2">再見</div>
  </div>
  <div id="notes"><span>一下以新增備忘稿</span></div>
  <div id="status">
    <div style="left:567px;top:0.600px;width:24px;height:8px;background:#cdcdcd"></div>
    <span style="left:493px">備忘稿</span><span style="left:540.700px">註解</span><span style="left:754px">80%</span>
    <svg style="left:480px;top:0" width="310" height="7" viewBox="480 497.500 310 7" fill="none" stroke="#555" stroke-width="0.900">
      <path d="M486.500 503l2.500-2.200 2.500 2.200M485.500 504.500h7"/><rect x="530" y="501" width="7.500" height="6" rx="0.800"/>
      <rect x="575" y="500.800" width="8" height="6"/><path d="M577 500.800v6M575 502.800h8"/>
      <path d="M600.500 501h2.500v2.500h-2.500zM604.500 501h2.500v2.500h-2.500z"/><rect x="625.500" y="500.800" width="3" height="5"/><rect x="630" y="500.800" width="3" height="5"/>
      <rect x="650" y="500.800" width="7" height="6"/><path d="M652 502.800h3"/>
      <path d="M702.500 501v4" stroke-width="1.800"/><path d="M744 502v3" stroke-width="0.800"/>
      <path d="M781.500 504l2.500-2.800 2.500 2.800" />
    </svg>
  </div>
</div>
<svg width="0" height="0" style="position:absolute"><defs>
<filter id="b1" x="-20%" y="-20%" width="140%" height="140%"><feGaussianBlur stdDeviation="0.7"/></filter>
<filter id="b2" x="-20%" y="-20%" width="140%" height="140%"><feGaussianBlur stdDeviation="1.3"/></filter>
<filter id="b3" x="-20%" y="-20%" width="140%" height="140%"><feGaussianBlur stdDeviation="2.5"/></filter>
<g id="micoff"><path transform="scale(0.52) translate(-12 -12)" fill="currentColor" d="M19 11h-1.700c0 .74-.16 1.430-.43 2.050l1.230 1.230c.56-.98.900-2.090.900-3.280zm-4.020.17c0-.06.02-.11.02-.17V5c0-1.660-1.340-3-3-3S9 3.340 9 5v.18l5.980 5.990zM4.270 3L3 4.270l6.010 6.010V11c0 1.660 1.330 3 2.990 3 .22 0 .44-.03.65-.08l1.660 1.660c-.71.33-1.500.52-2.310.52-2.760 0-5.300-2.100-5.300-5.100H5c0 3.410 2.720 6.230 6 6.720V21h2v-3.280c.91-.13 1.770-.45 2.540-.9L19.730 21 21 19.730 4.270 3z"/></g>
</defs></svg>
<div class="tile" id="p1" style="left:801px;top:35px;background:radial-gradient(ellipse at 50% 55%,#59320f 0%,#53300f 55%,#4a2b10 85%,#43270f 100%)"><svg width="107" height="143" viewBox="801 35 107 143" style="position:absolute;left:0;top:0">
<defs><clipPath id="av1"><circle cx="854.400" cy="106.300" r="24.300"/></clipPath></defs>
<g clip-path="url(#av1)"><g filter="url(#b2)">
<rect x="826" y="78" width="58" height="58" fill="#1d1913"/>
<ellipse cx="851" cy="86" rx="10" ry="4" fill="#2c2a28"/>
<ellipse cx="836" cy="95.500" rx="4.500" ry="3" fill="#8c8c86"/><ellipse cx="840" cy="97" rx="3" ry="2.500" fill="#a0a4a8"/>
<ellipse cx="834.500" cy="102" rx="5" ry="2.200" fill="#c09a1c"/>
<ellipse cx="839.500" cy="108" rx="3" ry="4" fill="#3a362e"/><ellipse cx="834" cy="112" rx="2.500" ry="4" fill="#c9c4b8"/>
<ellipse cx="833" cy="120" rx="3" ry="3" fill="#a09880"/>
<ellipse cx="869" cy="98.500" rx="5.500" ry="2.300" fill="#b8941c"/><ellipse cx="875.500" cy="104" rx="2.600" ry="5" fill="#4a4234"/>
<ellipse cx="869" cy="91" rx="6" ry="4" fill="#24221e"/><ellipse cx="877" cy="113" rx="2" ry="3" fill="#a8a090"/>
<path d="M843 127q3 6 7 6l-1-8z" fill="#a88c1c"/><path d="M852 130q10 3 14-3l4 2q-6 8-18 4z" fill="#b8a268"/>
<path d="M846 104q8-5 20-3l5 8 2 18q-10 7-25 3z" fill="#14130f"/>
<path d="M847 102.500q-6 2-7.500 10l-1.500 11q3 4 7 1l3-12z" fill="#a47654"/>
<path d="M842 121q10-2 17-8l4 4q-6 7-19 9z" fill="#ac7c58"/>
<ellipse cx="862.500" cy="111" rx="3.800" ry="3.400" fill="#b08260"/>
<path d="M869 102.500q5 1 6.500 8l1 10q-2 3-5 1l-3-12z" fill="#9a6c4e"/>
<ellipse cx="853.500" cy="94.500" rx="4.600" ry="6.500" fill="#a47858"/>
<path d="M848.500 91q1-6 7.500-6t6 6.500q-4-3-7-2.500t-6.500 2z" fill="#1c1612"/>
<path d="M850.500 98.500q3 3 7-0.500l-1 4q-3 1.500-5-0.500z" fill="#3a2a1e"/>
<ellipse cx="858.500" cy="118.500" rx="3.600" ry="2.400" fill="#b8961a"/>
</g></g>
<circle cx="854.400" cy="106.300" r="24.300" fill="none" stroke="#4b2c14" stroke-width="1" opacity="0.500"/><circle cx="894.500" cy="48.700" r="8.500" fill="#7a3c08" opacity="0.350" filter="url(#b1)"/>
<g transform="translate(894.5 48.7)" color="#f2b68c"><use href="#micoff"/></g>
</svg>
<div class="nm">鄭國清</div></div>
<div class="tile" id="p2" style="left:916.400px;top:35px;width:107.600px;background:#9a9a98"><svg width="108" height="143" viewBox="916 35 108 143" style="position:absolute;left:-0.400px;top:0">
<g filter="url(#b2)">
<rect x="912" y="30" width="116" height="75" fill="#e9e9e7"/>
<rect x="912" y="30" width="116" height="18" fill="#d3d3d0"/>
<path d="M912 47.500l64 2.500v2.600l-64-1.600z" fill="#a6a6a2"/><path d="M975 50l49-9v3.500l-49 8.500z" fill="#c4c4c2"/>
<rect x="949" y="51" width="3" height="16" fill="#b4b4ae"/><rect x="987" y="47" width="2.500" height="9" fill="#bcbcb8"/>
<path d="M927 37l11 3-2 2.500-10-3z" fill="#9c9c94"/>
<rect x="912" y="51" width="37" height="16" fill="#dadad8"/>
<rect x="912" y="66.500" width="35.500" height="20" fill="#b4d9dc"/>
<rect x="919" y="68" width="14" height="2.500" fill="#8ab0b8"/>
<rect x="937.400" y="73.600" width="9" height="3.400" fill="#5e7a68"/><rect x="936.600" y="76.800" width="10" height="2.600" fill="#c8805e"/>
<rect x="924.700" y="81.600" width="3.600" height="7" fill="#3c8a62"/><rect x="916" y="83" width="3" height="6" fill="#4c9a72"/>
<rect x="916" y="86.300" width="31" height="3.200" fill="#bcd896"/><rect x="912" y="89.500" width="36" height="4" fill="#d0816e"/>
<path d="M961 101.500l6-21 2.500 0v22z" fill="#b9b5a9"/>
<rect x="912" y="96" width="116" height="86" fill="#6c6866"/>
<rect x="912" y="94" width="48" height="10" fill="#a09c98"/>
<ellipse cx="934.200" cy="95" rx="5" ry="5.200" fill="#25211f"/><ellipse cx="949.300" cy="99" rx="5.400" ry="5" fill="#292523"/>
<path d="M926 100q8-3 16 0l2 10h-20z" fill="#4a4a50"/><path d="M943 104q6-3 12 0l2 8h-14z" fill="#55525a"/>
<ellipse cx="997.700" cy="89.500" rx="3.400" ry="4.200" fill="#484440"/><ellipse cx="1002.500" cy="94" rx="4.600" ry="5.300" fill="#514c48"/><ellipse cx="1013.600" cy="91.500" rx="3.600" ry="4.400" fill="#56524e"/>
<path d="M1016.500 86q3-8.500 8-8.500v20h-7z" fill="#bc2626"/><path d="M1016.500 94h8v24h-7z" fill="#34344a"/>
<path d="M997 99l14-1 4 10-16 4z" fill="#d4d0cc"/>
<rect x="916" y="112" width="17" height="9" fill="#d6d6d2"/>
<path d="M955 105l11 0 1 11-12 1z" fill="#63548e"/>
<path d="M924 118l10-2 3 10-1 30-12 1z" fill="#655795"/>
<path d="M936 115q9-3 18 0l1 9-19 2z" fill="#6e9cd8"/>
<path d="M936 123.500l39-2 1 9-40 3z" fill="#7aa08e"/>
<path d="M936 132.500l25-1.500v18l-25 1z" fill="#6c4d36"/>
<path d="M936 141h9.500v19h-9.500z" fill="#c6c2be"/>
<rect x="916" y="122" width="9" height="30" fill="#4a4440"/>
<path d="M916 152l9 0 1 15h-10z" fill="#5b8b7a"/>
<path d="M916 166l36 0 0 12h-36z" fill="#9b9b98"/>
<path d="M947 147h13v17h-13z" fill="#3c3a3a"/>
<path d="M960 124q2-10 12-10l10 4 0 48-22 2z" fill="#19191b"/>
<path d="M958 160l24 0 2 18h-28z" fill="#3e3c3c"/>
<ellipse cx="988.500" cy="103.500" rx="8.400" ry="6.500" fill="#191715"/>
<path d="M982 108q6 5 12.500 2l0.500 7q-6 4-12 0z" fill="#8c6a52"/>
<path d="M980 126l20-4 2 8-22 6.500z" fill="#bd8f6c"/>
<path d="M996 103l24-3 2 10-25 3z" fill="#e0e0de"/>
<path d="M997.700 110l22-2 0 26-18 2z" fill="#8899a0"/>
<path d="M977 137l47-3.500v15l-47 2z" fill="#2b6b4c"/>
<path d="M980 148l44-1.500v32h-42z" fill="#7b4b2b"/>
<rect x="984" y="153" width="24" height="24" fill="#33261e"/>
<rect x="988.500" y="153" width="3.600" height="16" fill="#c44646"/><rect x="994" y="155" width="3.600" height="10" fill="#c87060"/><rect x="987.500" y="166" width="4" height="11" fill="#dcdce2"/><rect x="996" y="166" width="4.500" height="11" fill="#3c74b4"/><rect x="1003" y="160" width="3.500" height="17" fill="#26364a"/>
<rect x="1008" y="150" width="4" height="28" fill="#86542e"/>
</g>
<circle cx="1010.1" cy="48.9" r="8.100" fill="#3a3b3d"/>
<g transform="translate(1010.1 49.0)" color="#cacaca"><use href="#micoff"/></g>
</svg>
<div class="nm">黃柔瑄</div></div>
<div class="tile" id="p3" style="left:801px;top:187px;background:#8a8a86"><svg width="107" height="143" viewBox="801 187 107 143" style="position:absolute;left:0;top:0">
<g filter="url(#b2)">
<rect x="797" y="183" width="115" height="151" fill="#d6d6d1"/>
<rect x="797" y="183" width="115" height="9" fill="#d0d0cc"/>
<rect x="799" y="197.500" width="18" height="50" fill="#f1f1f0"/>
<rect x="817" y="190" width="32" height="41" fill="#dcdcc0"/><rect x="819" y="208" width="28" height="22" fill="#e9e9e4"/><rect x="822" y="195" width="22" height="10" fill="#dcd8a8"/>
<rect x="849.600" y="192" width="60" height="40" fill="#b3c5cf"/>
<path d="M869 192.500h17v10q-8 6-17-2z" fill="#3c8ad2"/>
<ellipse cx="860" cy="205" rx="7" ry="7" fill="#dfe6e8"/><ellipse cx="877" cy="211" rx="7" ry="6" fill="#e4e8e8"/><ellipse cx="894" cy="206" rx="6" ry="8" fill="#d0dadc"/><rect x="902" y="196" width="6" height="22" fill="#8ab4cc"/>
<ellipse cx="854.300" cy="225.300" rx="4.200" ry="4.400" fill="#e6b268"/><ellipse cx="869.400" cy="229.500" rx="4" ry="4.200" fill="#e8b878"/><ellipse cx="887.700" cy="221.300" rx="4.400" ry="5" fill="#e2a050"/><ellipse cx="893" cy="230" rx="3.400" ry="3.600" fill="#e4b070"/><ellipse cx="905" cy="224.500" rx="3.500" ry="4" fill="#dca458"/>
<ellipse cx="883" cy="228.500" rx="3" ry="3.500" fill="#6a9a58"/>
<rect x="819" y="231.600" width="78" height="16.500" fill="#3c3630"/>
<rect x="872.600" y="238" width="15" height="11" fill="#8a6a4a"/><rect x="887" y="236" width="10" height="10" fill="#6a5a4c"/>
<ellipse cx="830.500" cy="229" rx="5" ry="5.200" fill="#1e1a18"/><ellipse cx="829.200" cy="234" rx="3.600" ry="4.200" fill="#b48c6c"/>
<path d="M819 240q10-6 21 0l1 9h-22z" fill="#2c2624"/><path d="M810 244.500l24-0.500 0 3.500-24 0.500z" fill="#c4a484"/>
<ellipse cx="903" cy="232.500" rx="5.500" ry="6" fill="#221c1a"/><ellipse cx="901.500" cy="238.500" rx="3.600" ry="4.600" fill="#cca48c"/><path d="M888.500 247q8-5 20.500-3v10h-20.500z" fill="#b8a0a8"/>
<rect x="797" y="247.500" width="41" height="24" fill="#d2d2cd"/><rect x="801" y="256" width="20" height="5" fill="#b8ccb4"/><rect x="799" y="268" width="31" height="7" fill="#e5e5e1"/><rect x="799" y="275" width="18" height="8" fill="#c4c4c0"/>
<rect x="827" y="253" width="8" height="12" fill="#a8c4cc"/>
<rect x="866" y="250" width="44" height="30" fill="#c4c4c2"/>
<path d="M877.400 253q10-3 19 2l4 12-17 2z" fill="#e8a0b2"/>
<rect x="894.800" y="265" width="15" height="13" fill="#1c1c20"/>
<path d="M863 258q10-4 16 4l3 16-17 2z" fill="#9cb2d2"/>
<rect x="893" y="278" width="18" height="12" fill="#dadad6"/><rect x="893" y="290" width="18" height="14" fill="#c2c2c0"/>
<path d="M882 278q8-2 12 2l3 20 11 6v15l-22 0-6-20z" fill="#3a68b8"/>
<path d="M815.500 284q2-14 18-18l30 0q16 4 19 20l6 10-56 2-18-4z" fill="#8b8785"/>
<path d="M837.500 240q8-5 22-4 13 3 13.500 14l-2 11-9-10-20-2-5 6z" fill="#171513"/>
<path d="M838 249q8-3 20-1l4 8-2 10q-8 5-16 1l-6-9z" fill="#c8a282"/>
<path d="M842 267q6 5 16 2l1 7q-10 4-18-2z" fill="#706c6a"/>
<path d="M801 284q10-3 20 1l1 11-21 3z" fill="#1d1d1f"/>
<ellipse cx="830" cy="286.500" rx="6.200" ry="4" fill="#c8a488"/>
<path d="M801 297.500l83-1.500 0 12-83 3z" fill="#2b7a5a"/>
<path d="M814 297l44-2.500 1 8-44 3z" fill="#dcd4b2"/><path d="M832 297l16-1.500 1 5-16 1.500z" fill="#e6d66c"/>
<path d="M801 305l60-1 0 5-60 1z" fill="#e1e1e1"/>
<path d="M801 309l83-2v24h-83z" fill="#c7c7c7"/>
<rect x="863" y="316" width="17.500" height="16" fill="#e9e9e9"/>
<rect x="880.500" y="320" width="30" height="12" fill="#1c1c20"/>
</g>
<circle cx="894.4" cy="200.0" r="8.100" fill="#3a3b3d"/>
<g transform="translate(894.4 200.1)" color="#cacaca"><use href="#micoff"/></g>
</svg>
<div class="nm">莊怡姮</div></div>
<div class="tile" id="p4" style="left:916.400px;top:187px;width:107.600px;background:#777"><svg width="108" height="143" viewBox="916 187 108 143" style="position:absolute;left:-0.400px;top:0">
<g filter="url(#b2)">
<rect x="912" y="183" width="116" height="151" fill="#e1e7ee"/>
<rect x="912" y="183" width="116" height="22" fill="#d1d1cd"/>
<rect x="912" y="204.600" width="116" height="3.400" fill="#6e6e6e"/><rect x="912" y="208" width="116" height="3" fill="#a2a2a2"/><rect x="912" y="211" width="116" height="3.600" fill="#5e5e5e"/>
<rect x="952" y="212" width="5" height="3.500" fill="#2a2a2a"/>
<!-- third person -->
<path d="M1005.500 226q1-10 10-11t12 4v14l-22 2z" fill="#2a2624"/>
<path d="M1007.500 226q6-5 17-3v28q-10 3-15-5z" fill="#cfa890"/>
<path d="M1010 234h6M1019 233h5" stroke="#6a5040" stroke-width="1.200" fill="none"/>
<path d="M1004 258l12-8 8 2v14l-20 0z" fill="#c0241c"/>
<path d="M1000 270l24-8v70h-24z" fill="#1b1b21"/>
<!-- boy -->
<path d="M978 248q1-13 16-13.500t16 13l-2 10-28 0z" fill="#141212"/>
<path d="M980.500 251q12-5 25.500 0l-1 14q-4 9-11.500 9t-12-9z" fill="#b89078"/>
<path d="M979 249q6-7 15-6l13 5-7 3-19 2z" fill="#181414"/>
<path d="M986 257h5M997 257h5" stroke="#4a3428" stroke-width="1.100" fill="none"/>
<path d="M981 278q12-8 26-2l12 14 3 42h-41z" fill="#29292d"/>
<!-- man -->
<path d="M931.500 240q-2-24 22-25.500t24 22l-1 12-44 2z" fill="#4c4c4e"/>
<path d="M936 234q4-12 18-13t20 12l1 24q-3 22-19 24t-21-22z" fill="#c6a48a"/>
<path d="M934 236q2-16 21-17.500t21 15l-5-6q-7-4-12-3l-4 3-5-3q-5 0-9 3z" fill="#363638"/>
<path d="M941 240.500h9M959 240.500h9" stroke="#6a5444" stroke-width="1.400" fill="none"/>
<path d="M942.500 244.500h6.500M961 244.500h6.500" stroke="#3a2c24" stroke-width="1.600" fill="none"/>
<path d="M948 265h12" stroke="#9a6656" stroke-width="1.700" fill="none"/><path d="M951 254q4 3 8 0" stroke="#a88068" stroke-width="1.200" fill="none"/>
<path d="M944 272q10 8 26 0l2 12-30 0z" fill="#b48e76"/>
<path d="M917 292q2-16 14-20l12-3q12 14 28 1l14 3q14 4 20 20l4 40h-92z" fill="#131313"/>
<g fill="none" stroke-width="1.500" opacity="0.750">
<circle cx="937.400" cy="303" r="5.500" stroke="#8a3a4c" stroke-dasharray="1.500 1.500"/><circle cx="937.400" cy="303" r="2.500" stroke="#8a3a4c" stroke-dasharray="1 1"/>
<circle cx="953.500" cy="304" r="4" stroke="#3a5c8c" stroke-dasharray="1.500 1.500"/>
<circle cx="970" cy="303" r="6" stroke="#a89868" stroke-dasharray="1.500 1.500"/><circle cx="970" cy="303" r="2.800" stroke="#a89868" stroke-dasharray="1 1"/>
<circle cx="986.600" cy="314.500" r="6" stroke="#3a6a9a" stroke-dasharray="1.500 1.500"/><circle cx="986.600" cy="314.500" r="2.800" stroke="#3a6a9a" stroke-dasharray="1 1"/>
<path d="M954 318q16-8 32 8" stroke="#9a8458" stroke-width="2"/><path d="M952 324.500h20" stroke="#a02c34" stroke-dasharray="2 1.500" stroke-width="2"/>
</g>
</g>
<rect x="917.300" y="187.900" width="105.800" height="141.200" rx="7.200" fill="none" stroke="#b9cdf8" stroke-width="2"/>
<circle cx="1010" cy="200.300" r="8.100" fill="#d4e0fb"/>
<path d="M1005.800 199.200v2.300M1010.100 197.400v5.700M1014.400 199.200v2.300" stroke="#0c2c7c" stroke-width="2.300" stroke-linecap="round"/>
</svg>
<div class="nm">何伯升</div></div>
<div class="tile" id="p5" style="left:801px;top:338px;background:#999"><svg width="107" height="143" viewBox="801 338 107 143" style="position:absolute;left:0;top:0">
<g filter="url(#b2)">
<rect x="797" y="334" width="115" height="151" fill="#cfd2ca"/>
<rect x="797" y="334" width="115" height="46" fill="#cdcdcb"/>
<rect x="797" y="334" width="115" height="9" fill="#bfbfbd"/><ellipse cx="900" cy="348" rx="18" ry="14" fill="#adadab"/>
<ellipse cx="853.600" cy="351" rx="19" ry="4" fill="#fefefe"/><ellipse cx="830.500" cy="375.500" rx="11.500" ry="2.800" fill="#fafafa"/><ellipse cx="871" cy="373.600" rx="13" ry="2.800" fill="#fbfbfb"/><ellipse cx="805" cy="354" rx="6" ry="2.400" fill="#f2f2f2"/><ellipse cx="907" cy="372.300" rx="3" ry="2.500" fill="#f2f2f2"/>
<ellipse cx="853.600" cy="351" rx="26" ry="8" fill="#e4e4e2" opacity="0.500"/>
<path d="M833 338h5v8.500h-5z" fill="#5c5c60"/><path d="M850 338l12 0-1 4-11 0z" fill="#77777a"/>
<path d="M858 359.500l8 3 14-1.500 1 2.500-12 2 6 4-2 1.500-9-4-7 5-2-1.500 6-5.500-5-4z" fill="#5e5e62"/>
<path d="M825 361v13M836 361v13" stroke="#8a8a86" stroke-width="0.900"/>
<rect x="797" y="372.300" width="20" height="40" fill="#4a8a8a"/><rect x="797" y="372" width="6" height="40" fill="#3a7a7c"/>
<rect x="813.900" y="390.600" width="14.500" height="20" fill="#b1d0d4"/>
<rect x="817" y="379" width="26" height="12" fill="#d4d6ce"/><rect x="828" y="388" width="15" height="22" fill="#dadad6"/>
<rect x="829" y="401" width="8" height="10" fill="#a08070"/>
<rect x="843" y="385" width="66" height="7.200" fill="#2b6a6b"/>
<rect x="843" y="392" width="66" height="15" fill="#d6d8cc"/>
<rect x="843.500" y="391" width="9.500" height="14.500" fill="#c8d0b0"/><rect x="853.500" y="391.500" width="9.500" height="14" fill="#6ab0c0"/><rect x="864" y="391" width="11" height="14.500" fill="#e4e8e8"/><rect x="876" y="393.500" width="15" height="12" fill="#e2e5e0"/><rect x="891.600" y="390.500" width="13" height="17" fill="#a86a4a"/><rect x="893.600" y="392.500" width="9" height="12" fill="#c9c0a0"/>
<rect x="797" y="407" width="115" height="30" fill="#8c847e"/>
<rect x="842" y="405" width="48" height="8" fill="#b8b8b4"/>
<ellipse cx="813" cy="409.500" rx="4.500" ry="4" fill="#4a4644"/><path d="M806 413q7-3 13 0l1 8h-15z" fill="#8a8a8c"/>
<ellipse cx="836" cy="413" rx="3.800" ry="4.200" fill="#221e1e"/><ellipse cx="840" cy="406.500" rx="2.800" ry="3" fill="#2a2626"/>
<rect x="801" y="419" width="33" height="13" fill="#6a4a3a"/><rect x="804" y="424" width="10" height="6" fill="#cac2b2"/><rect x="818" y="420" width="9" height="10" fill="#5e8a8a"/>
<ellipse cx="854.300" cy="404.800" rx="2.600" ry="2.800" fill="#2a2424"/>
<ellipse cx="853.600" cy="410.800" rx="4.200" ry="4.200" fill="#e8402e"/>
<ellipse cx="864.700" cy="411.500" rx="4.500" ry="4.500" fill="#2a2424"/>
<path d="M837.700 428q6-14 20-13.500l8 6-1 10-27 1z" fill="#6a60b8"/><path d="M842 428q4-8 10-8l2 10z" fill="#a83a4a"/>
<path d="M864.700 417.700q5-1 7 4l-1 8-7-1z" fill="#e0dce0"/>
<path d="M872 414l10 2 2 20-12 0z" fill="#54443e"/>
<rect x="886.900" y="409.800" width="7" height="27" fill="#e6e8ea"/><ellipse cx="889.500" cy="406.500" rx="3.800" ry="4" fill="#2a2422"/>
<rect x="880" y="416" width="7" height="18" fill="#8ab0c8"/>
<rect x="895" y="410" width="15" height="24" fill="#8a8e94"/><rect x="893.200" y="432" width="6.500" height="8" fill="#d84030"/>
<path d="M856 436.500l44-1 6 46h-50z" fill="#b8a088"/>
<path d="M850.500 425l24-4 6 12 0 28-8 3-4-20-12 4z" fill="#4a3028"/><rect x="862" y="440" width="9" height="22" fill="#5a3828"/><rect x="871" y="432" width="8" height="22" fill="#503228"/>
<rect x="899.600" y="425.600" width="10" height="27" fill="#5a4a3a"/>
<path d="M801 431l53-0.800 0 8.300-53 1z" fill="#5a8a7a"/>
<path d="M801 438.500l43-0.800v10l-43 0.800z" fill="#8a5a3a"/>
<rect x="797" y="448" width="48" height="36" fill="#a49484"/>
<rect x="797" y="459" width="14" height="24" fill="#3a3a30"/>
<rect x="836" y="443" width="8" height="38" fill="#5a3a28"/><rect x="812.300" y="447.900" width="6.300" height="13" fill="#4a3026"/>
<rect x="797" y="474" width="40" height="8" fill="#5e4a3c"/>
<path d="M844 442l9 0 4 40h-13z" fill="#d8d8dc"/><rect x="852" y="467" width="4.500" height="13" fill="#3a5ab0"/>
<path d="M804 447.900l8.500 0 1 12.700-9.500 1z" fill="#d8d8d4"/>
<path d="M896.400 454q5-3 9 0l1 24h-9z" fill="#25427c"/><rect x="905" y="440" width="5" height="42" fill="#2a2220"/>
<path d="M878 470l16 0 6 6-20 0z" fill="#4a4038"/>
</g>
<circle cx="894.4" cy="351.7" r="8.100" fill="#3a3b3d"/>
<g transform="translate(894.4 351.8)" color="#cacaca"><use href="#micoff"/></g>
</svg>
<div class="nm">潘新都</div></div>
<div class="tile" id="p6" style="left:916.400px;top:338px;width:107.600px;background:#37383a"><svg width="108" height="143" viewBox="916 338 108 143" style="position:absolute;left:-0.400px;top:0">
<circle cx="956.600" cy="397.300" r="16" fill="#f1eee3"/>
<g filter="url(#b1)">
<rect x="952.300" y="385" width="10.500" height="8.200" fill="#ef8f98"/><rect x="953.300" y="386" width="8.500" height="6.200" fill="#f4aab0"/>
<rect x="954" y="388.200" width="2.400" height="2" fill="#b83040"/><rect x="958.600" y="388.200" width="2.400" height="2" fill="#b83040"/><rect x="955.500" y="391" width="4" height="1.200" fill="#7a3030"/>
<rect x="949.200" y="386.500" width="2.600" height="9" fill="#ec8a94"/>
<rect x="952.300" y="393.800" width="10.500" height="8" fill="#f1a6aa"/><rect x="954" y="395" width="7" height="3" fill="#fbe4e2"/>
<rect x="962.900" y="393.800" width="2.600" height="8" fill="#ec8a94"/>
<rect x="953.300" y="402.300" width="3.200" height="5.200" fill="#3a5ac0"/><rect x="958.800" y="402.300" width="3.200" height="5.200" fill="#3a5ac0"/>
<rect x="952.500" y="407.300" width="4.500" height="1.700" fill="#26368a"/><rect x="958.300" y="407.300" width="4.500" height="1.700" fill="#26368a"/>
</g>
<circle cx="986.400" cy="397.300" r="16.600" fill="#37383a"/>
<circle cx="986.400" cy="397.300" r="16" fill="#ee501f"/>
</svg>
<div style="position:absolute;left:54px;top:50.300px;width:32px;height:18px;line-height:18px;text-align:center;color:#fff;font-size:12.700px;white-space:nowrap;filter:blur(0.300px)">淑君</div>
<div style="position:absolute;left:-0.400px;top:85.200px;width:108px;height:17px;line-height:17px;text-align:center;color:#fff;font-size:11px;font-weight:700;white-space:nowrap;letter-spacing:-0.050px;word-spacing:0.500px;filter:blur(0.300px)">還有另外 30 位使用者</div>
</div>
</body>
</html>
